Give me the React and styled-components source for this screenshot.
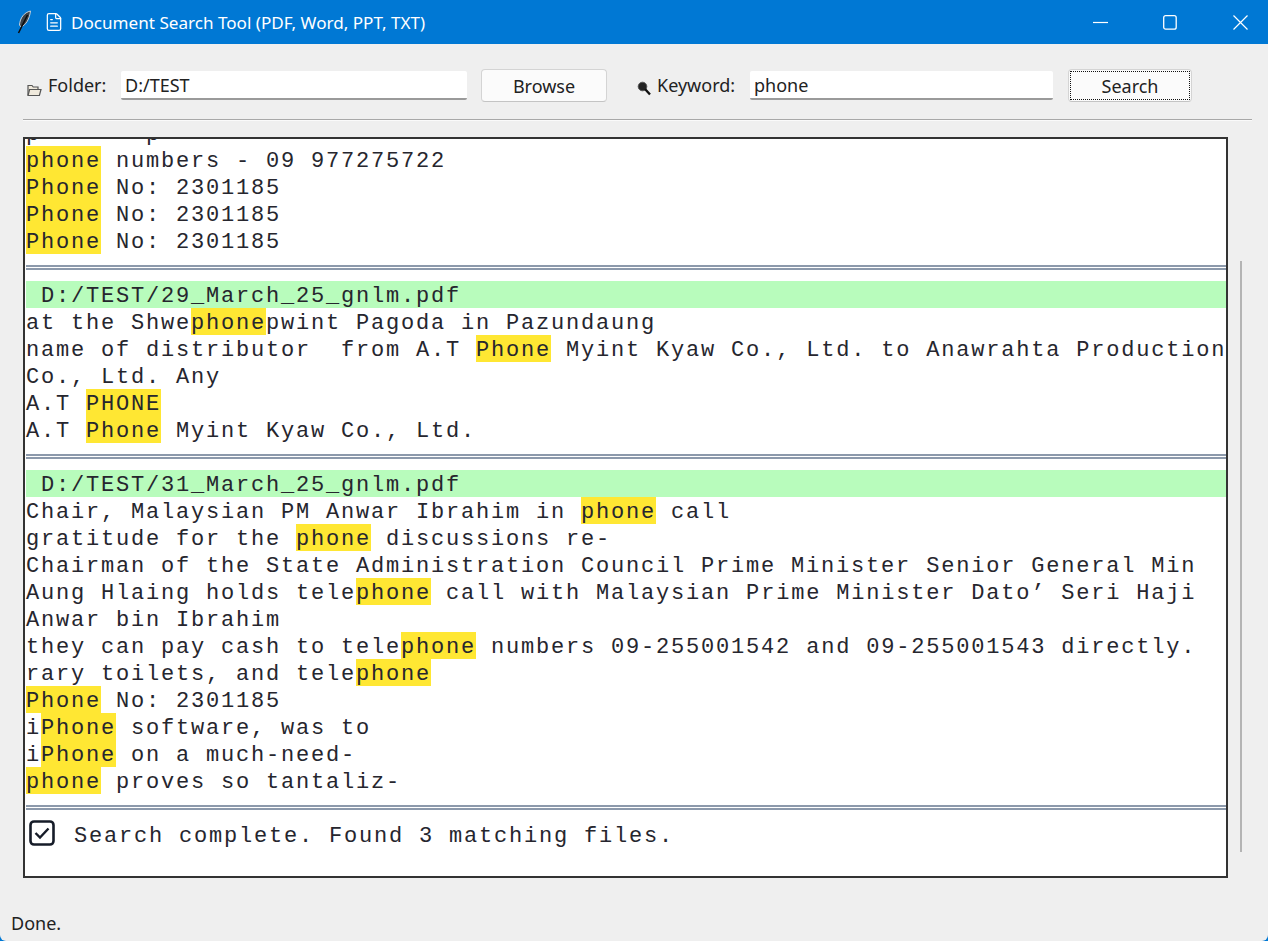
import React from "react";
import styled, { createGlobalStyle } from "styled-components";
import { FileText } from "lucide-react";

const GlobalStyle = createGlobalStyle`
  html, body {
    margin: 0;
    padding: 0;
    background: #0078d4;
  }
`;

const Window = styled.div`
  width: 1268px;
  height: 941px;
  display: flex;
  flex-direction: column;
  background: #efefef;
  border-radius: 0 0 6px 6px;
  overflow: hidden;
  font-family: "Noto Sans", sans-serif;
  color: #222;
`;

const TitleBar = styled.div`
  height: 44px;
  flex: none;
  display: flex;
  align-items: center;
  gap: 12px;
  background: #0078d4;
  color: #fff;
  padding-left: 16px;
`;

const TitleText = styled.span`
  font-size: 17.1px;
  margin-left: -5px;
  white-space: nowrap;
`;

const WindowControls = styled.div`
  margin-left: auto;
  display: flex;
  align-items: center;
  gap: 55px;
  padding-right: 20px;
`;

const Toolbar = styled.div`
  height: 75px;
  flex: none;
  display: flex;
  align-items: center;
  padding: 8px 0 0 26px;
  box-sizing: border-box;
`;

const ToolIcon = styled.svg`
  flex: none;
  margin-top: ${(p) => p.$drop}px;
  margin-left: ${(p) => p.$gap || 0}px;
`;

const Label = styled.span`
  font-size: 18px;
  white-space: nowrap;
  margin-top: -2px;
  margin-left: ${(p) => p.$gap}px;
  width: ${(p) => p.$width}px;
`;

const Entry = styled.div`
  width: ${(p) => p.$width}px;
  height: 29px;
  box-sizing: border-box;
  background: #fff;
  border-bottom: 2px solid #9a9a9a;
  border-radius: 2px;
  padding-left: 4px;
  font-size: 18px;
  line-height: 28px;
`;

const Button = styled.div`
  width: ${(p) => p.$width}px;
  height: 33px;
  box-sizing: border-box;
  margin-left: ${(p) => p.$gap}px;
  background: #fbfbfb;
  border: 1px solid #d4d4d4;
  border-bottom-color: #c4c4c4;
  border-radius: 4px;
  display: flex;
  align-items: center;
  justify-content: center;
  font-size: 18px;
  position: relative;
`;

const FocusRing = styled.span`
  position: absolute;
  inset: 1px;
  border: 1px dotted #111;
`;

const Rule = styled.div`
  height: 2px;
  flex: none;
  margin: 0 16px 0 23px;
  background: linear-gradient(#a8a8a8 50%, #fafafa 50%);
`;

const Body = styled.div`
  flex: none;
  display: flex;
  margin: 16px 0 0 23px;
`;

const ResultBox = styled.div`
  width: 1205px;
  height: 741px;
  box-sizing: border-box;
  border: 2px solid #333;
  background: #fff;
  padding-left: 1px;
  overflow: hidden;
`;

const ResultText = styled.div`
  margin-top: -20px;
  width: 1200px;
  font-family: "Liberation Mono", monospace;
  font-size: 22px;
  letter-spacing: 1.8px;
  line-height: 31px;
  color: #26262e;
  white-space: pre;
`;

const Line = styled.div`
  height: 27px;
`;

const FileLine = styled(Line)`
  background: #b8fcbc;
`;

const Hit = styled.span`
  display: inline-block;
  height: 27px;
  background: #ffe733;
`;

const Separator = styled.div`
  height: 27px;
  display: flex;
  align-items: center;
  &::before {
    content: "";
    flex: 1;
    height: 5px;
    box-sizing: border-box;
    border-top: 5px double #8c99ab;
  }
`;

const DoneLine = styled(Line)`
  display: flex;
  gap: 19px;
  padding-left: 3px;
`;

const CheckBox = styled.svg`
  flex: none;
  margin-top: -1px;
`;

const ScrollTrack = styled.div`
  display: flex;
  margin-left: 12px;
  padding: 124px 0 26px;
  box-sizing: border-box;
  height: 741px;
`;

const ScrollThumb = styled.div`
  width: 2px;
  background: #b4b4b4;
`;

const StatusBar = styled.div`
  margin-top: 33px;
  padding-left: 11px;
  font-size: 18px;
  line-height: 24px;
`;

const FeatherIcon = () => (
  <svg width="16" height="24" viewBox="0 0 16 24">
    <path d="M14.5 1C8 2.5 4 8 3.5 15l1.5 2c5-2 8.500-8 9.500-16z" fill="#3a4046" stroke="#d8dde2" strokeWidth="0.9" />
    <path d="M11.500 5L2.500 23" stroke="#0c0c0c" strokeWidth="1.500" />
  </svg>
);

const MinimizeIcon = () => (
  <svg width="15" height="15" viewBox="0 0 15 15">
    <path d="M0 7.500h15" stroke="#fff" strokeWidth="1.200" />
  </svg>
);

const MaximizeIcon = () => (
  <svg width="15" height="15" viewBox="0 0 15 15" fill="none">
    <rect x="0.700" y="0.700" width="12.500" height="13.500" rx="2" stroke="#fff" strokeWidth="1.300" />
  </svg>
);

const CloseIcon = () => (
  <svg width="15" height="15" viewBox="0 0 15 15">
    <path d="M0.500 0.500l14 14M14.500 0.500l-14 14" stroke="#fff" strokeWidth="1.200" />
  </svg>
);

const FolderIcon = () => (
  <ToolIcon $drop={7} width="16" height="15" viewBox="0 0 16 15" fill="#efe9dc" stroke="#555" strokeWidth="1.200">
    <path d="M2 13V3.500h4l1.200 1.500H12v2.500" />
    <path d="M2 13.500l1.600-6H15l-1.600 6z" />
  </ToolIcon>
);

const SearchIcon = () => (
  <ToolIcon $drop={5} $gap={30} width="14" height="15" viewBox="0 0 14 15">
    <circle cx="5.500" cy="5.500" r="4.300" fill="#222" stroke="#555" />
    <path d="M8 8l5 5.500" stroke="#111" strokeWidth="2.400" />
  </ToolIcon>
);

const CheckIcon = () => (
  <CheckBox width="26" height="26" viewBox="0 0 26 26" fill="none">
    <rect x="1.500" y="1.500" width="23" height="23" rx="3.500" stroke="#161c28" strokeWidth="2.600" />
    <path d="M6.500 13l4.500 4.500 8.500-9" stroke="#161c28" strokeWidth="2.400" />
  </CheckBox>
);

// splits a line on the keyword, any case, same as the tag config in the tool
const Highlighted = ({ text }) =>
  text.split(/(phone)/i).map((part, i) =>
    i % 2 ? <Hit key={i}>{part}</Hit> : part
  );

const sections = [
  {
    lines: [
      "p       p",
      "phone numbers - 09 977275722",
      "Phone No: 2301185",
      "Phone No: 2301185",
      "Phone No: 2301185",
    ],
  },
  {
    file: " D:/TEST/29_March_25_gnlm.pdf",
    lines: [
      "at the Shwephonepwint Pagoda in Pazundaung",
      "name of distributor  from A.T Phone Myint Kyaw Co., Ltd. to Anawrahta Production",
      "Co., Ltd. Any",
      "A.T PHONE",
      "A.T Phone Myint Kyaw Co., Ltd.",
    ],
  },
  {
    file: " D:/TEST/31_March_25_gnlm.pdf",
    lines: [
      "Chair, Malaysian PM Anwar Ibrahim in phone call",
      "gratitude for the phone discussions re-",
      "Chairman of the State Administration Council Prime Minister Senior General Min",
      "Aung Hlaing holds telephone call with Malaysian Prime Minister Dato’ Seri Haji",
      "Anwar bin Ibrahim",
      "they can pay cash to telephone numbers 09-255001542 and 09-255001543 directly.",
      "rary toilets, and telephone",
      "Phone No: 2301185",
      "iPhone software, was to",
      "iPhone on a much-need-",
      "phone proves so tantaliz-",
    ],
  },
];

export default function App() {
  return (
    <Window>
      <GlobalStyle />
      <TitleBar>
        <FeatherIcon />
        <FileText size={20} strokeWidth={1.5} />
        <TitleText>Document Search Tool (PDF, Word, PPT, TXT)</TitleText>
        <WindowControls>
          <MinimizeIcon />
          <MaximizeIcon />
          <CloseIcon />
        </WindowControls>
      </TitleBar>

      <Toolbar>
        <FolderIcon />
        <Label $gap={6} $width={73}>Folder:</Label>
        <Entry $width={346}>D:/TEST</Entry>
        <Button $gap={14} $width={126}>Browse</Button>
        <SearchIcon />
        <Label $gap={6} $width={93}>Keyword:</Label>
        <Entry $width={303}>phone</Entry>
        <Button $gap={15} $width={124}>
          <FocusRing />
          Search
        </Button>
      </Toolbar>
      <Rule />

      <Body>
        <ResultBox>
          <ResultText>
            {sections.map((section, i) => (
              <React.Fragment key={i}>
                {section.file && <FileLine>{section.file}</FileLine>}
                {section.lines.map((line, j) => (
                  <Line key={j}>
                    <Highlighted text={line} />
                  </Line>
                ))}
                <Separator />
              </React.Fragment>
            ))}
            <DoneLine>
              <CheckIcon />
              Search complete. Found 3 matching files.
            </DoneLine>
          </ResultText>
        </ResultBox>
        <ScrollTrack>
          <ScrollThumb />
        </ScrollTrack>
      </Body>

      <StatusBar>Done.</StatusBar>
    </Window>
  );
}
